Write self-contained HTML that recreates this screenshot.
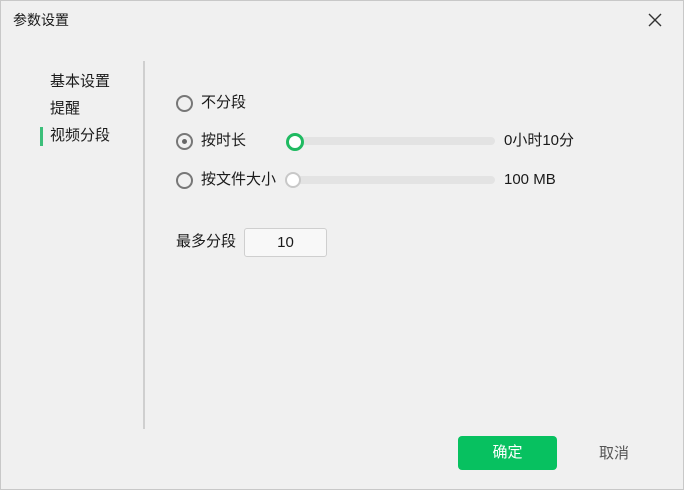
<!DOCTYPE html><html><head><meta charset="utf-8"><style>
body{margin:0;width:684px;height:490px;overflow:hidden;background:#f0f0f0;font-family:"Liberation Sans","Noto Sans CJK SC",sans-serif;font-size:15px;color:#1a1a1a}
.win{position:absolute;left:0;top:0;width:682px;height:488px;border:1px solid #c8c8c8;background:#f0f0f0}
.a{position:absolute;line-height:20px;white-space:nowrap}
.radio{position:absolute;width:13px;height:13px;border:2px solid #777;border-radius:50%;box-sizing:content-box}
.track{position:absolute;left:287px;width:207px;height:8px;background:#e3e3e3;border-radius:4px}
.knob{position:absolute;width:12px;height:12px;border-radius:50%;background:#fff}
</style></head><body><div class="win">
<div class="a" style="left:12px;top:9px;font-size:14px">参数设置</div>
<svg style="position:absolute;left:647px;top:12px" width="14" height="14"><path d="M1 1L13 13M13 1L1 13" stroke="#333" stroke-width="1.4"/></svg>
<div class="a" style="left:49px;top:71px">基本设置</div>
<div class="a" style="left:49px;top:98px">提醒</div>
<div class="a" style="left:49px;top:125px">视频分段</div>
<div style="position:absolute;left:39px;top:126px;width:3px;height:19px;background:#3cbf7a"></div>
<div style="position:absolute;left:142px;top:60px;width:2px;height:368px;background:#cfcfcf"></div>
<div class="radio" style="left:175px;top:94px"></div>
<div class="a" style="left:200px;top:92px">不分段</div>
<div class="radio" style="left:175px;top:132px"><div style="position:absolute;left:4px;top:4px;width:5px;height:5px;border-radius:50%;background:#666"></div></div>
<div class="a" style="left:200px;top:130px">按时长</div>
<div class="track" style="top:136px"></div>
<div class="knob" style="left:285px;top:132px;border:3px solid #1fba61"></div>
<div class="a" style="left:503px;top:130px">0小时10分</div>
<div class="radio" style="left:175px;top:171px"></div>
<div class="a" style="left:200px;top:169px">按文件大小</div>
<div class="track" style="top:175px"></div>
<div class="knob" style="left:284px;top:171px;border:2px solid #c8c8c8"></div>
<div class="a" style="left:503px;top:169px">100 MB</div>
<div class="a" style="left:175px;top:231px">最多分段</div>
<div style="position:absolute;left:243px;top:227px;width:81px;height:27px;border:1px solid #cfcfcf;border-radius:3px;background:#f8f8f8;text-align:center;line-height:27px">10</div>
<div style="position:absolute;left:457px;top:435px;width:99px;height:34px;background:#07c160;border-radius:4px;color:#fff;text-align:center;line-height:34px">确定</div>
<div class="a" style="left:598px;top:443px;color:#555">取消</div>
</div></body></html>
